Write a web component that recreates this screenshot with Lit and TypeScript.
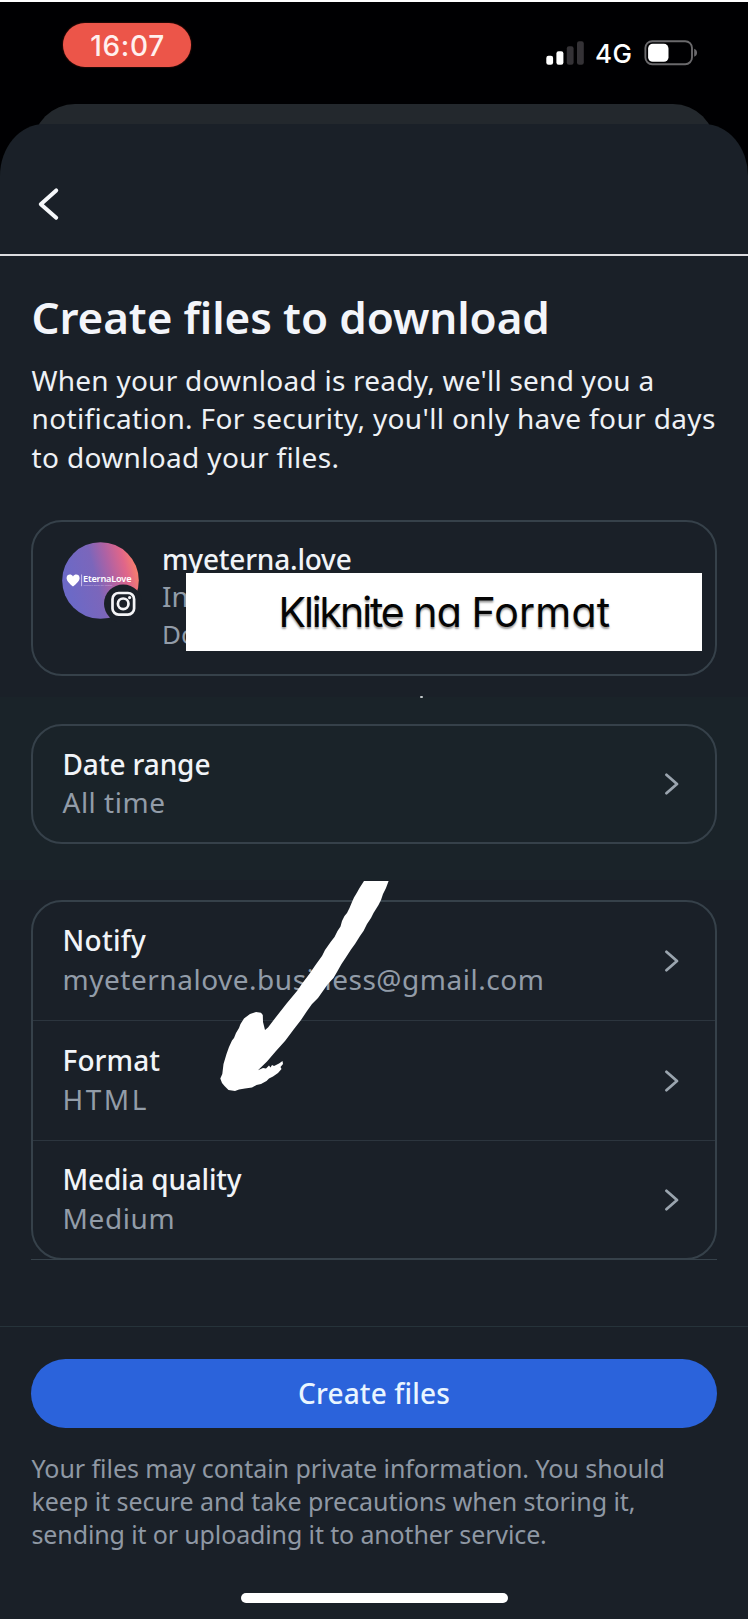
import { LitElement, html, css } from "lit";
import { customElement, property } from "lit/decorators.js";

interface Line {
  text: string;
  tracking: number;
}

interface Setting {
  label: Line;
  value: Line;
}

const line = (text: string, tracking = 0): Line => ({ text, tracking });

const dateRange: Setting = { label: line("Date range", -0.1), value: line("All time", 0.5) };

const delivery: Setting[] = [
  { label: line("Notify", 0.3), value: line("myeternalove.business@gmail.com", 0.52) },
  { label: line("Format", 0.1), value: line("HTML", 2.5) },
  { label: line("Media quality", -0.2), value: line("Medium", 0.6) },
];

const intro: Line[] = [
  line("When your download is ready, we'll send you a", 0.24),
  line("notification. For security, you'll only have four days", 0.37),
  line("to download your files.", 0.35),
];

const privacy: Line[] = [
  line("Your files may contain private information. You should", -0.05),
  line("keep it secure and take precautions when storing it,", -0.05),
  line("sending it or uploading it to another service.", -0.13),
];

const textLine = (l: Line, cls: string) =>
  html`<div class=${cls} style="letter-spacing:${l.tracking}px">${l.text}</div>`;

@customElement("phone-status")
class PhoneStatus extends LitElement {
  static styles = css`
    :host {
      display: flex;
      justify-content: space-between;
      align-items: flex-start;
      box-sizing: border-box;
      height: 102px;
      padding: 21px 50px 0 63px;
      font-family: Inter, "Liberation Sans", sans-serif;
      color: #fff;
    }
    .clock {
      box-sizing: border-box;
      width: 128px;
      height: 44px;
      padding-left: 1px;
      border-radius: 22px;
      background: #ec5549;
      box-shadow: 0 0 2px #7a1c14;
      color: #fff0ee;
      text-align: center;
      font-size: 28px;
      font-weight: 500;
      line-height: 47px;
      letter-spacing: 0.68px;
    }
    .right {
      display: flex;
      align-items: center;
      margin-top: 17px;
      height: 26px;
    }
    .net {
      margin: 1px 0 0 10px;
      width: 40px;
      font-size: 26px;
      font-weight: 500;
      line-height: 26px;
      letter-spacing: 0.5px;
    }
    svg {
      display: block;
    }
    .battery {
      margin-left: 9px;
    }
  `;
  render() {
    return html`
      <div class="clock">16:07</div>
      <div class="right">
        <svg width="39" height="26" viewBox="0 0 39 26">
          <rect x="0.3" y="15.8" width="6.8" height="9" rx="2.2" fill="#fff" />
          <rect x="10.4" y="11.2" width="7" height="13.6" rx="2.2" fill="#fff" />
          <rect x="20.8" y="6.2" width="6.8" height="18.6" rx="2.2" fill="#343236" />
          <rect x="31" y="1.2" width="6.8" height="23.6" rx="2.2" fill="#343236" />
        </svg>
        <div class="net">4G</div>
        <svg class="battery" width="54" height="26" viewBox="0 0 54 26">
          <rect x="1.4" y="1.2" width="46.6" height="23" rx="6.8" fill="none" stroke="#6a696c" stroke-width="1.9" />
          <rect x="4.1" y="3.8" width="20.4" height="18" rx="4.6" fill="#fff" />
          <path d="M50.2 8.7C54 10 54 15.4 50.2 16.7Z" fill="#6a696c" />
        </svg>
      </div>
    `;
  }
}

@customElement("setting-row")
class SettingRow extends LitElement {
  @property({ attribute: false }) setting!: Setting;
  static styles = css`
    :host {
      display: flex;
      justify-content: space-between;
      align-items: center;
      box-sizing: border-box;
      padding: 0 35.5px 0 29.5px;
    }
    .text {
      padding-bottom: 2px;
    }
    .label,
    .value {
      font-size: 28px;
      line-height: 38.3px;
      white-space: nowrap;
    }
    .label {
      font-weight: 520;
      color: #f1f4f8;
    }
    .value {
      color: #929ca8;
    }
    svg {
      display: block;
    }
  `;
  render() {
    return html`
      <div class="text">
        ${textLine(this.setting.label, "label")}
        ${textLine(this.setting.value, "value")}
      </div>
      <svg width="16" height="24" viewBox="0 0 16 24">
        <path
          d="M2.4 2.8L13 12L2.4 21.2"
          fill="none"
          stroke="#9aa4ae"
          stroke-width="2.8"
          stroke-linecap="round"
          stroke-linejoin="round"
        />
      </svg>
    `;
  }
}

@customElement("profile-avatar")
class ProfileAvatar extends LitElement {
  static styles = css`
    :host {
      display: block;
      width: 80px;
      height: 80px;
    }
    svg {
      display: block;
    }
    .brand {
      font: 600 9.2px "Noto Sans", sans-serif;
      fill: #fff;
    }
    .tag {
      font: 2.1px "Noto Sans", sans-serif;
      fill: #cdbbe0;
    }
  `;
  render() {
    return html`
      <svg width="80" height="80" viewBox="0 0 80 80">
        <defs>
          <linearGradient id="fill" x1="0.1" y1="0.65" x2="1" y2="0.42">
            <stop offset="0" stop-color="#6c69c6" />
            <stop offset="0.4" stop-color="#7b66bb" />
            <stop offset="0.62" stop-color="#ae62a4" />
            <stop offset="0.84" stop-color="#e06689" />
            <stop offset="1" stop-color="#f8806c" />
          </linearGradient>
        </defs>
        <circle cx="38.5" cy="38.5" r="38.3" fill="url(#fill)" />
        <path
          d="M11 44.6C7.5 41.5 4.6 38.8 4.6 35.9C4.6 31.8 9.4 31.4 11 34.4C12.6 31.4 17.6 31.8 17.6 35.9C17.6 38.8 14.5 41.5 11 44.6Z"
          fill="#fff"
        />
        <path d="M19.6 32.5V44.2" stroke="#d9cdf0" stroke-width="0.9" />
        <text class="brand" x="21" y="40" textLength="48.5">EternaLove</text>
        <text class="tag" x="21.3" y="44" textLength="29">Moments which last forever</text>
        <circle cx="61.2" cy="61.7" r="19.2" fill="#1a2028" />
        <g fill="none" stroke="#f4f5f7" stroke-width="2.7">
          <rect x="50.5" y="51" width="21.6" height="21.6" rx="6.2" />
          <circle cx="61.2" cy="61.8" r="5.3" />
        </g>
        <circle cx="67.6" cy="55.6" r="1.6" fill="#f4f5f7" />
      </svg>
    `;
  }
}

@customElement("app-root")
class AppRoot extends LitElement {
  static styles = css`
    :host {
      display: block;
      position: relative;
      box-sizing: border-box;
      width: 748px;
      height: 1619px;
      overflow: hidden;
      border-top: 2px solid #fff;
      background: #000002;
      font-family: "Noto Sans", "Open Sans", sans-serif;
      color: #eef1f5;
    }
    .back-sheet {
      margin: 0 33px;
      height: 60px;
      border-radius: 42px 42px 0 0;
      background: #23282d;
    }
    .sheet {
      position: relative;
      margin-top: -40.5px;
      height: 1496px;
      border-radius: 44px 44px 0 0 / 52px 52px 0 0;
      background: #1a2028;
    }
    .bar {
      display: flex;
      box-sizing: border-box;
      height: 132.5px;
      padding: 62.5px 0 0 36px;
      border-bottom: 2.5px solid #dcdce0;
    }
    .bar svg,
    .arrow {
      display: block;
    }
    .intro {
      box-sizing: border-box;
      height: 263.5px;
      padding: 32.5px 31px 0;
    }
    h1 {
      margin: 0 0 16px;
      padding-left: 0.5px;
      font-size: 44px;
      font-weight: 590;
      line-height: 56px;
      letter-spacing: -0.1px;
      white-space: nowrap;
      color: #f3f5fa;
    }
    .body {
      padding-left: 0.5px;
      font-size: 28px;
      line-height: 38.6px;
      white-space: nowrap;
    }
    .card {
      margin: 0 31px;
      box-sizing: border-box;
      border: 2px solid #36414a;
      border-radius: 31px;
    }
    .account {
      display: flex;
      gap: 20px;
      height: 156px;
      padding: 20.5px 29px 0;
    }
    .name,
    .meta,
    .meta-small {
      font-size: 28px;
      line-height: 38.3px;
      white-space: nowrap;
    }
    .name {
      margin-top: -2px;
      font-weight: 520;
      letter-spacing: -0.2px;
      color: #f1f4f8;
    }
    .meta,
    .meta-small {
      color: #929ca8;
    }
    .meta {
      line-height: 37.5px;
    }
    .meta-small {
      font-size: 26px;
      line-height: 37px;
    }
    .band {
      margin-top: 21.5px;
      box-sizing: border-box;
      height: 183px;
      padding-top: 27px;
      background: #1a2329;
    }
    .band .card {
      height: 120px;
    }
    .band .card setting-row {
      height: 116px;
    }
    .delivery {
      margin-top: 20px;
      height: 360px;
    }
    .delivery setting-row {
      height: 120px;
      border-bottom: 1.5px solid #2c353e;
    }
    .delivery setting-row:first-child {
      height: 119px;
      padding-bottom: 1px;
    }
    .delivery setting-row:last-child {
      height: 117px;
      border-bottom: 0;
    }
    .list-end {
      margin: -1px 31px 0;
      height: 1px;
      background: #36414a;
    }
    .footer {
      margin-top: 66px;
      border-top: 1.5px solid #26333a;
      padding: 31.5px 31px 0;
    }
    .cta {
      display: block;
      width: 100%;
      height: 69px;
      padding: 0;
      border: 0;
      border-radius: 35px;
      background: #2b63db;
      color: #e9f5ff;
      font: 500 28px/67px "Noto Sans", sans-serif;
      letter-spacing: 0.15px;
    }
    .privacy {
      padding-top: 24px;
    }
    .note {
      padding-left: 0.5px;
      font-size: 25px;
      line-height: 33.2px;
      white-space: nowrap;
      color: #8f98a4;
    }
    .home {
      margin: 41.5px auto 0;
      width: 267px;
      height: 10px;
      border-radius: 5px;
      background: #fff;
    }
    .caption {
      position: absolute;
      left: 186px;
      top: 570.5px;
      width: 516px;
      height: 78.5px;
      box-sizing: border-box;
      padding-left: 92.5px;
      background: #fff;
      color: #050505;
      font: 400 41px/79px Inter, sans-serif;
      font-feature-settings: "cv11";
      letter-spacing: -0.9px;
      white-space: nowrap;
      text-shadow: 0 2px 2px rgba(0, 0, 0, 0.4);
    }
    .tight {
      letter-spacing: -2.1px;
    }
    .wide {
      letter-spacing: 0.2px;
    }
    .speck {
      position: absolute;
      left: 420px;
      top: 694px;
      width: 2.5px;
      height: 2px;
      border-radius: 1px;
      background: #c4cacc;
    }
    .arrow {
      position: absolute;
      left: 215px;
      top: 878px;
    }
  `;

  render() {
    return html`
      <phone-status></phone-status>
      <div class="back-sheet"></div>
      <main class="sheet">
        <div class="bar">
          <svg width="26" height="36" viewBox="0 0 26 36">
            <path
              d="M20.2 4.4L4.8 18.2L20.2 31.8"
              fill="none"
              stroke="#f5f7fa"
              stroke-width="4"
              stroke-linecap="round"
              stroke-linejoin="round"
            />
          </svg>
        </div>
        <section class="intro">
          <h1>Create files to download</h1>
          ${intro.map((l) => textLine(l, "body"))}
        </section>
        <section class="card account">
          <profile-avatar></profile-avatar>
          <div>
            <div class="name">myeterna.love</div>
            <div class="meta">In</div>
            <div class="meta-small">Do</div>
          </div>
        </section>
        <section class="band">
          <div class="card"><setting-row .setting=${dateRange}></setting-row></div>
        </section>
        <section class="card delivery">
          ${delivery.map((s) => html`<setting-row .setting=${s}></setting-row>`)}
        </section>
        <div class="list-end"></div>
        <footer class="footer">
          <button class="cta">Create files</button>
          <div class="privacy">${privacy.map((l) => textLine(l, "note"))}</div>
          <div class="home"></div>
        </footer>
      </main>
      <div class="caption"><span class="tight">Kliknite</span> na <span class="wide">Format</span></div>
      <div class="speck"></div>
      <svg class="arrow" width="180" height="216" viewBox="215 880 180 216">
        <path
          fill="#fff"
          d="M364 881H388.6L386 888L383 894L381 900L378.5 905L373.5 913L371 918L367 924L363.5 931L360 936L355 944L351 949.5L345.5 958L341.5 964L337 972L333.5 978L327.5 984.5L318 998L312 1004L307 1011L301 1020L294 1029L285 1041L276 1051L267 1061.5L258 1070.3L263 1068L266 1068.5L269 1065.5L270.5 1067.5L272 1065L274 1066L279 1063.5L282.5 1061L283 1064L280.5 1067L281.5 1069L278 1073L273 1076.5L269 1078.5L266.5 1081L261 1084L256.5 1085L252 1087.5L245 1088.5L239 1089.5L235 1091L228.5 1090L224.5 1086L222 1083L220.3 1078.5L222.3 1074L223.5 1064L226.5 1054L229 1047L232 1040.5L234 1038L236 1033L239 1028L240.5 1024L244 1018.5L250 1014L256 1012L261 1012.7L262.8 1015L263 1022L265 1030L268 1027.5L276 1017L287 1003L297 991L302.5 983L309 974.5L315.5 965L322 956L325 950L331 941.5L334.5 937L337.5 931L340.5 926.5L342 921L344.5 916L347 913L349.5 908L352 902L354 897.5L357 892.5L359.5 888Z"
        />
      </svg>
    `;
  }
}
